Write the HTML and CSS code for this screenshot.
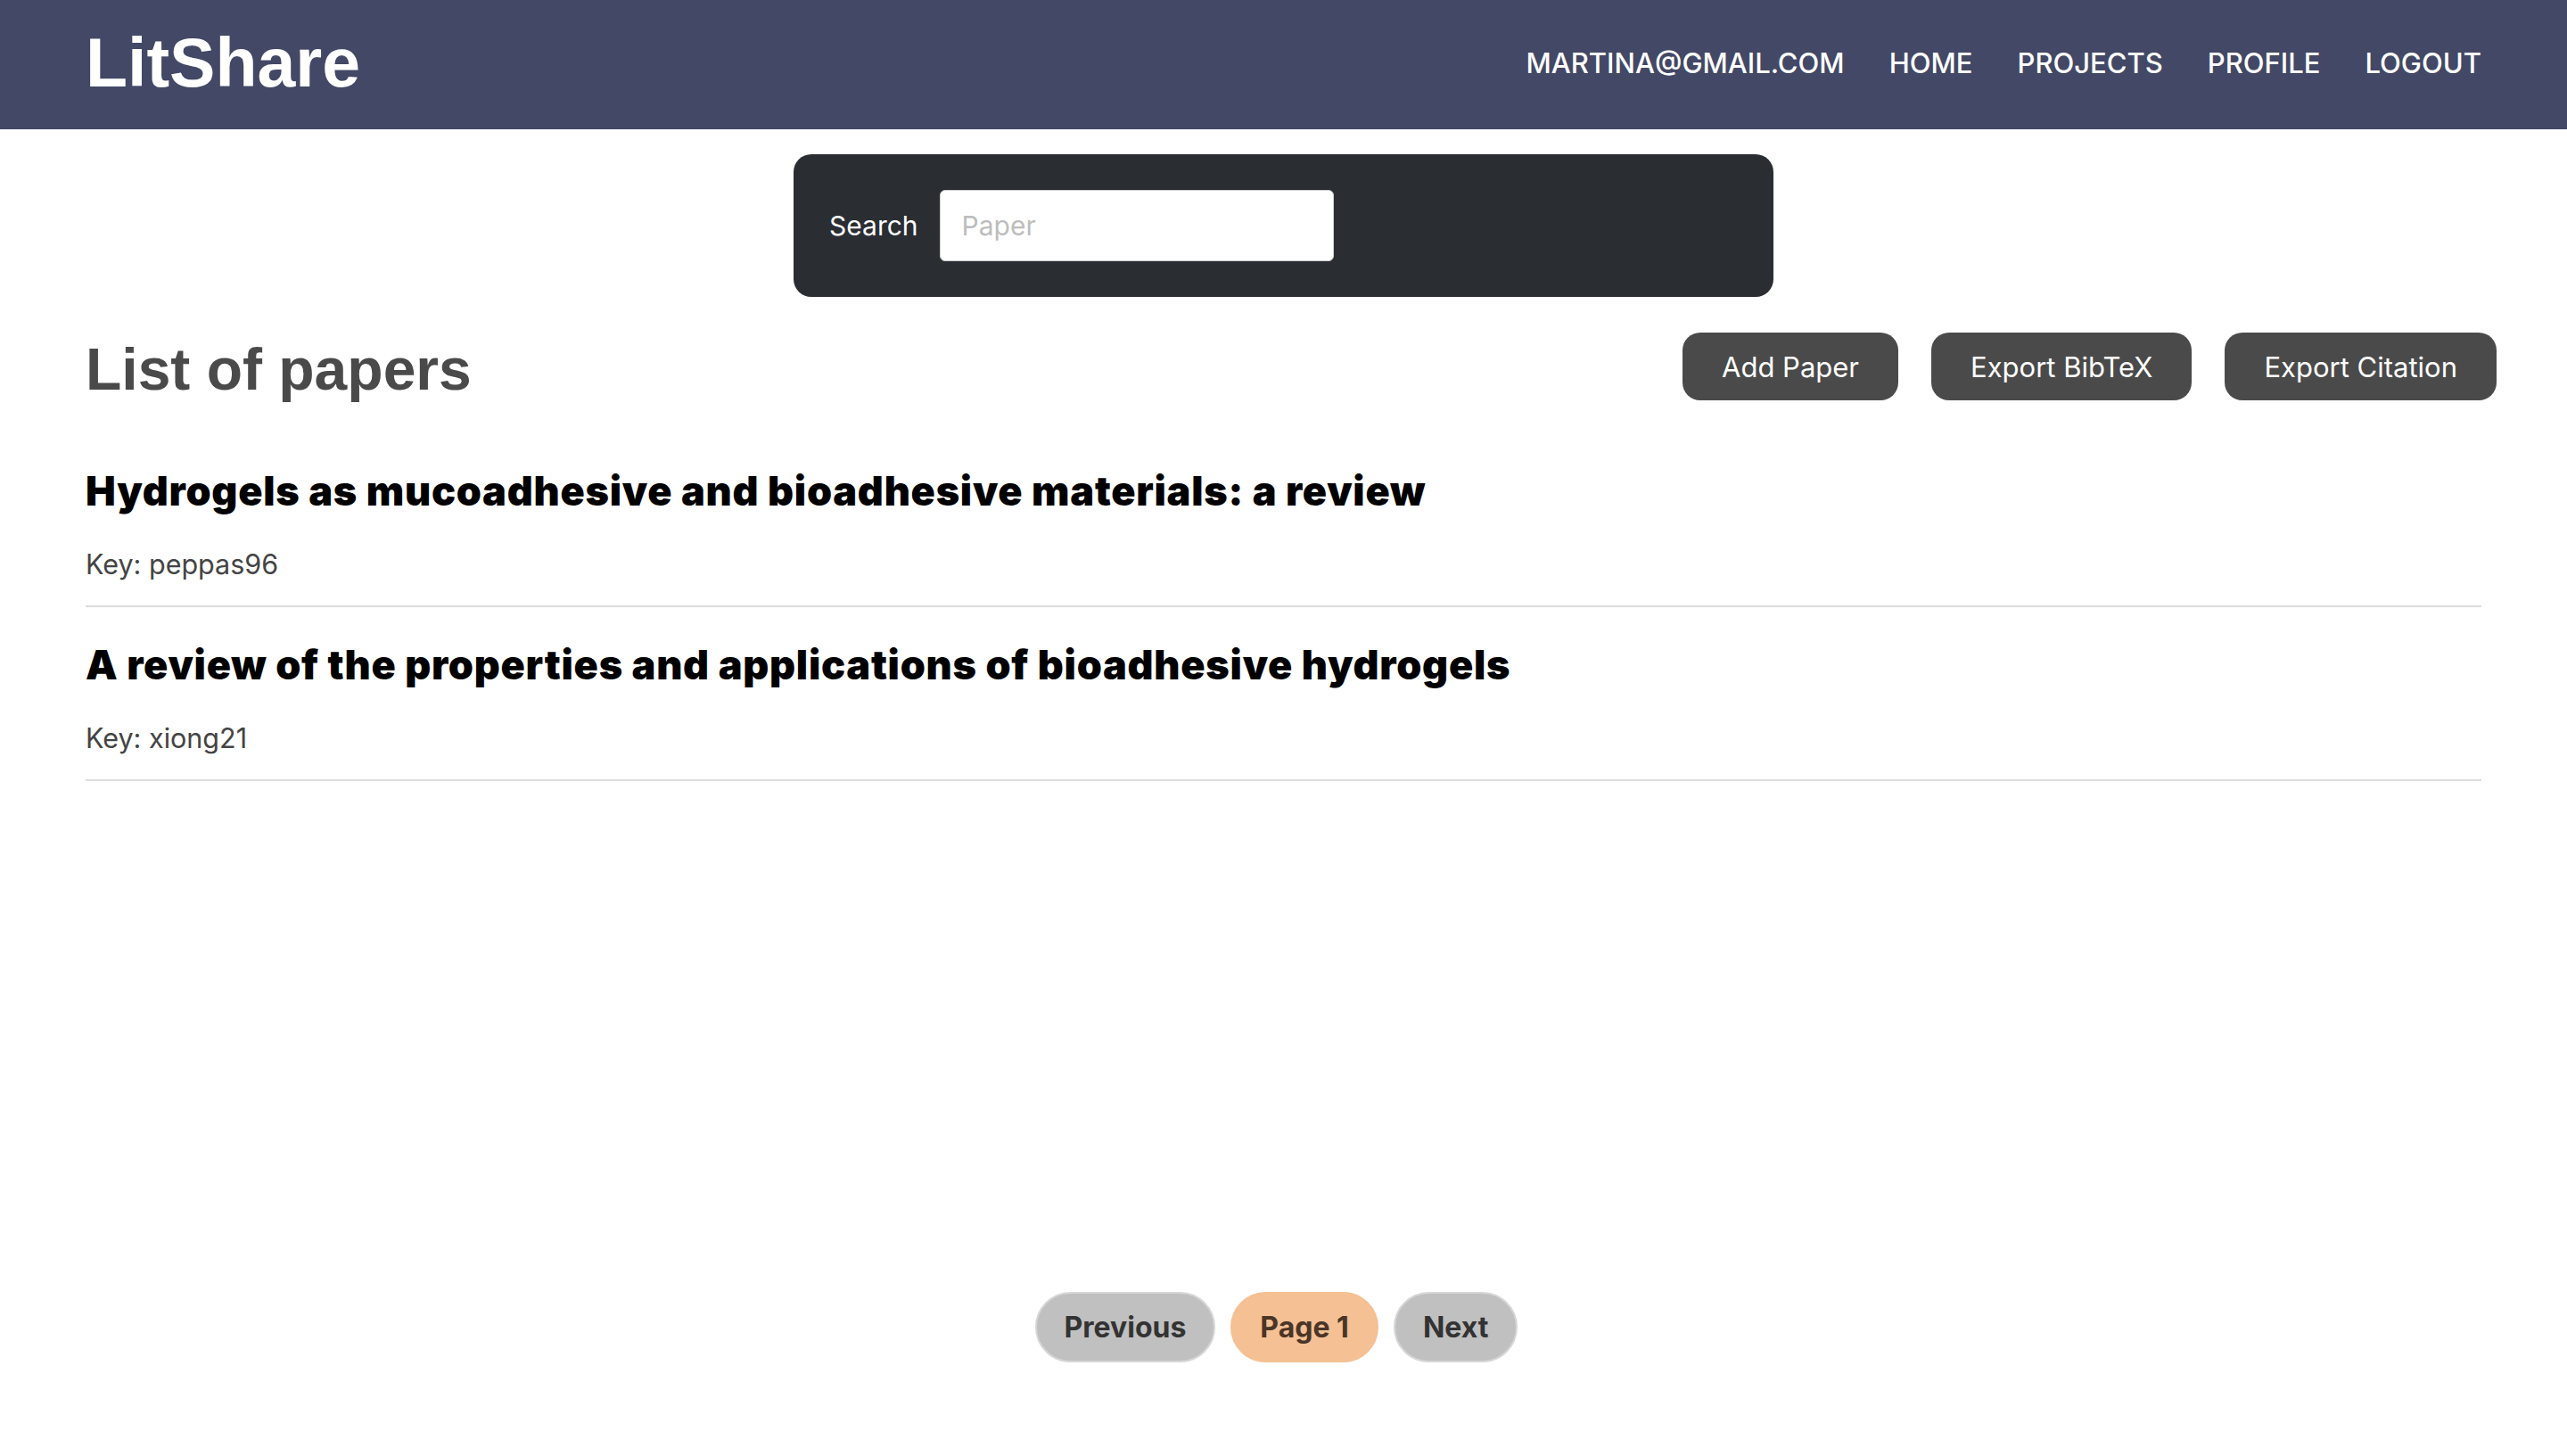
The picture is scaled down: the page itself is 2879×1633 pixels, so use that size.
FILE: index.html
```html
<!DOCTYPE html>
<html lang="en">
<head>
<meta charset="utf-8">
<title>LitShare</title>
<link rel="stylesheet" href="styles.css">
</head>
<body>
<div class="page">
  <header class="topbar">
    <div class="logo">LitShare</div>
    <nav class="nav">
      <a href="#">MARTINA@GMAIL.COM</a>
      <a href="#">HOME</a>
      <a href="#">PROJECTS</a>
      <a href="#">PROFILE</a>
      <a href="#">LOGOUT</a>
    </nav>
  </header>

  <div class="search-wrap">
    <form class="search">
      <label for="q">Search</label>
      <input id="q" type="text" placeholder="Paper">
    </form>
  </div>

  <main class="content">
    <div class="head-row">
      <h1>List of papers</h1>
      <div class="actions">
        <button class="btn">Add Paper</button>
        <button class="btn">Export BibTeX</button>
        <button class="btn">Export Citation</button>
      </div>
    </div>

    <ul class="papers">
      <li class="paper">
        <h3>Hydrogels as mucoadhesive and bioadhesive materials: a review</h3>
        <p>Key: peppas96</p>
      </li>
      <li class="paper">
        <h3>A review of the properties and applications of bioadhesive hydrogels</h3>
        <p>Key: xiong21</p>
      </li>
    </ul>
  </main>

  <div class="pager">
    <button class="pg">Previous</button>
    <button class="pg current">Page 1</button>
    <button class="pg">Next</button>
  </div>
</div>
</body>
</html>
```

FILE: styles.css
```css
* { box-sizing: border-box; }
html, body { margin: 0; padding: 0; }
body {
  font-family: Inter, "Noto Sans", sans-serif;
  background: #ffffff;
  color: #222;
}
.page {
  min-height: 100vh;
  display: flex;
  flex-direction: column;
}
.topbar {
  height: 145px;
  background: #424865;
  display: flex;
  align-items: center;
  justify-content: space-between;
  padding: 0 96px 0 96px;
}
.logo {
  font-family: "Liberation Sans", Arial, sans-serif;
  font-weight: 700;
  font-size: 77px;
  color: #ffffff;
  letter-spacing: 0;
  line-height: 1;
  margin-top: -4px;
}
.nav {
  display: flex;
  gap: 50px;
  align-items: center;
  margin-top: -4px;
}
.nav a {
  color: #ffffff;
  text-decoration: none;
  font-size: 31px;
  font-weight: 500;
  letter-spacing: 0;
}
.search-wrap {
  display: flex;
  justify-content: center;
  margin-top: 28px;
}
.search {
  width: 1099px;
  height: 160px;
  background: #2a2e33;
  border-radius: 20px;
  padding: 0 40px;
  display: flex;
  align-items: center;
  gap: 24px;
  margin: 0;
}
.search label {
  color: #ffffff;
  font-size: 30px;
}
.search input {
  width: 442px;
  height: 80px;
  border: 1px solid #d0d0d0;
  border-radius: 6px;
  background: #ffffff;
  font-family: Inter, sans-serif;
  font-size: 30px;
  padding: 0 24px;
  outline: none;
}
.search input::placeholder { color: #bdbdbd; }
.content {
  padding: 0 96px;
}
.head-row {
  margin-top: 40px;
  display: flex;
  align-items: center;
  justify-content: space-between;
  margin-right: -17px;
}
.head-row h1 {
  margin: 0;
  font-family: "Liberation Sans", Arial, sans-serif;
  font-size: 66px;
  font-weight: 700;
  color: #4a4a4a;
  line-height: 1;
  padding-top: 6px;
}
.actions {
  display: flex;
  gap: 37px;
}
.btn {
  height: 76px;
  padding: 0 44px;
  background: #4a4a4a;
  color: #ffffff;
  border: none;
  border-radius: 20px;
  font-family: Inter, sans-serif;
  font-size: 31px;
}
.papers {
  list-style: none;
  margin: 37px 0 0 0;
  padding: 0;
}
.paper {
  padding: 38px 0 28px 0;
  border-bottom: 2px solid #dcdcdc;
}
.paper h3 {
  margin: 0;
  font-size: 45px;
  line-height: 53px;
  font-weight: 900;
  color: #000000;
  letter-spacing: 0.75px;
}
.paper p {
  margin: 38px 0 0 0;
  font-size: 30.5px;
  line-height: 36px;
  color: #444444;
}
.pager {
  margin-top: auto;
  padding-bottom: 105px;
  display: flex;
  justify-content: center;
  gap: 17px;
  padding-right: 16px;
}
.pg {
  height: 79px;
  padding: 0 31px;
  border-radius: 40px;
  background: #c0c0c0;
  border: 2px solid #d6d6d6;
  color: #333333;
  font-family: Inter, sans-serif;
  font-weight: 700;
  font-size: 32px;
}
.pg.current {
  background: #f4c094;
  border-color: #f4c094;
  color: #4a3526;
}
```
